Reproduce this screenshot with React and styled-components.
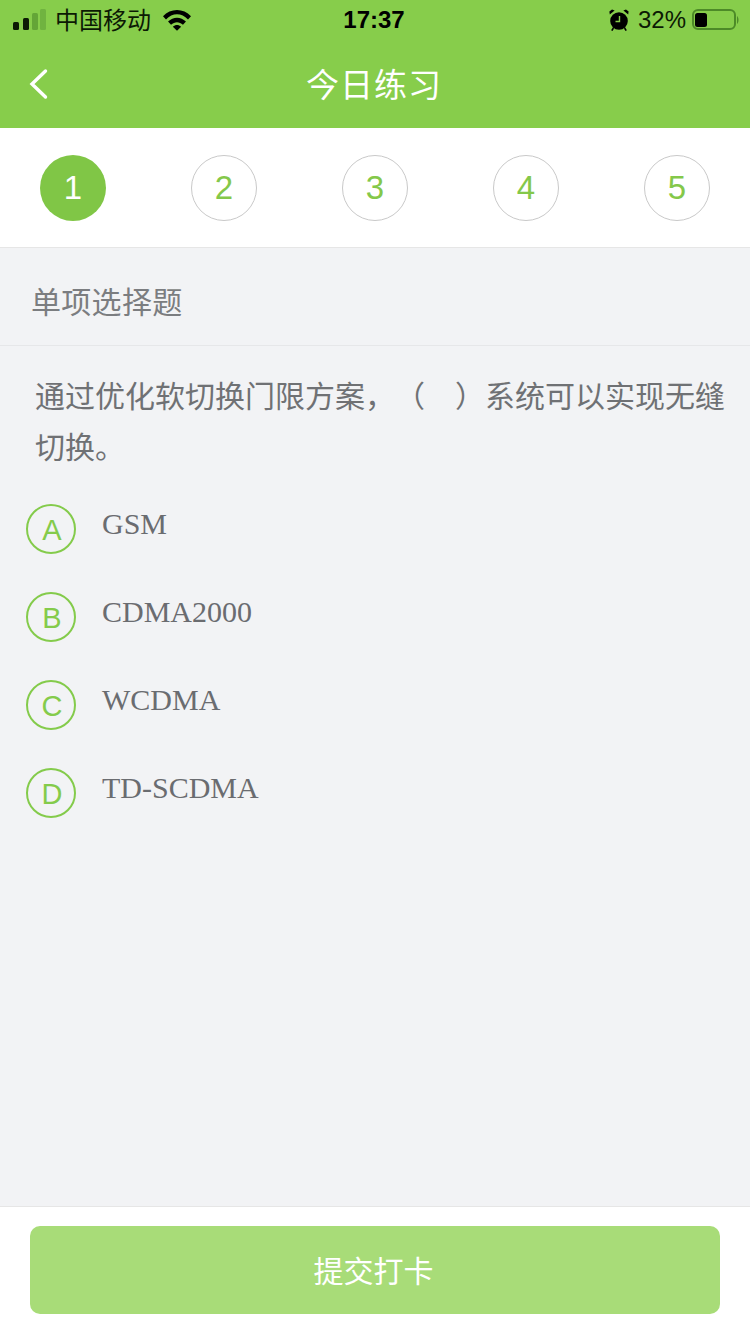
import React from 'react';
import styled, { createGlobalStyle } from 'styled-components';

const sans = `"Liberation Sans", "Noto Sans CJK SC", sans-serif`;

const GlobalStyle = createGlobalStyle`
  html, body {
    margin: 0;
    padding: 0;
    background: #f2f3f5;
  }
  * {
    box-sizing: border-box;
  }
`;

const Page = styled.div`
  width: 750px;
  height: 1334px;
  display: flex;
  flex-direction: column;
  background: #f2f3f5;
  font-family: ${sans};
  overflow: hidden;
`;

// Green header with the phone status bar
const Header = styled.header`
  height: 128px;
  background: #87cd4b;
  flex-shrink: 0;
`;

const StatusBar = styled.div`
  height: 40px;
  padding: 0 11px 0 13px;
  display: grid;
  grid-template-columns: 1fr auto 1fr;
  align-items: center;
  color: #0c1a04;
`;

const StatusLeft = styled.div`
  display: flex;
  align-items: center;
`;

const StatusRight = styled.div`
  display: flex;
  align-items: center;
  justify-content: flex-end;
`;

const Carrier = styled.span`
  font-size: 24px;
  margin: 0 12px 4px 8px;
`;

const Clock = styled.span`
  font-size: 24px;
  font-weight: 700;
  color: #000;
  margin-right: 4px;
`;

const Percent = styled.span`
  font-size: 24px;
  margin: 0 5px 0 9px;
`;

const TitleBar = styled.div`
  height: 88px;
  display: flex;
  align-items: center;
  justify-content: center;
  position: relative;
  padding: 0 2px 2px 0;
`;

const BackIcon = styled.svg`
  position: absolute;
  left: 28px;
  top: 28px;
`;

const Title = styled.h1`
  margin: 0;
  font-size: 33px;
  font-weight: 400;
  color: #fff;
  letter-spacing: 1px;
`;

// Question number strip
const Steps = styled.div`
  height: 120px;
  padding: 27px 40px 0;
  background: #fff;
  border-bottom: 1px solid #e6e6e6;
  display: flex;
  justify-content: space-between;
  align-items: flex-start;
  flex-shrink: 0;
`;

const Step = styled.div`
  width: 66px;
  height: 66px;
  border-radius: 50%;
  display: flex;
  align-items: center;
  justify-content: center;
  font-size: 33px;
  color: ${props => (props.$active ? '#fff' : '#84c84a')};
  background: ${props => (props.$active ? '#80c646' : '#fff')};
  border: ${props => (props.$active ? 'none' : '1px solid #c9c9c9')};
`;

const SectionLabel = styled.div`
  height: 98px;
  padding: 6px 30px 0 31px;
  display: flex;
  align-items: center;
  border-bottom: 1px solid #e6e7e9;
  font-size: 30px;
  letter-spacing: 0.3px;
  color: #7b7d80;
  flex-shrink: 0;
`;

const Main = styled.main`
  flex: 1;
`;

const Question = styled.p`
  margin: 0;
  padding: 25px 20px 0 35px;
  font-size: 30px;
  line-height: 51px;
  color: #6f7174;
  text-spacing-trim: space-all;
`;

const Options = styled.div`
  margin-top: 31px;
  padding-left: 26px;
  display: flex;
  flex-direction: column;
  gap: 38px;
`;

const Option = styled.div`
  display: flex;
  align-items: flex-start;
  height: 50px;
`;

const OptionBadge = styled.div`
  width: 50px;
  height: 50px;
  border-radius: 50%;
  border: 2px solid #84cb4b;
  display: flex;
  align-items: center;
  justify-content: center;
  font-size: 29px;
  color: #84cb4b;
  flex-shrink: 0;
  padding: 3px 0 0 2px;
`;

const OptionText = styled.span`
  margin-left: 26px;
  font-family: "Liberation Serif", serif;
  font-size: 30px;
  line-height: 40px;
  color: #6a6c70;
`;

const Footer = styled.footer`
  height: 128px;
  padding: 19px 30px 0;
  background: #fff;
  border-top: 1px solid #e6e6e6;
  flex-shrink: 0;
`;

const SubmitButton = styled.button`
  width: 690px;
  height: 88px;
  padding: 0 3px 2px 0;
  border: none;
  border-radius: 10px;
  background: #a8dc78;
  color: #fff;
  font-family: ${sans};
  font-size: 30px;
`;

const SignalBars = () => (
  <svg width="34" height="22" viewBox="0 0 34 22">
    <rect x="0" y="13" width="6" height="8" rx="1.5" fill="#0c1a04" />
    <rect x="10" y="9" width="6" height="12" rx="1.5" fill="#0c1a04" />
    <rect x="19" y="4" width="6" height="17" rx="1.5" fill="#64a537" />
    <rect x="27" y="0" width="6" height="21" rx="1.5" fill="#70b340" />
  </svg>
);

const WifiIcon = () => (
  <svg width="28" height="22" viewBox="0 0 30 23">
    <path d="M0 7.5C8 -1.5 22 -1.5 30 7.5L26.8 11C20 3.6 10 3.6 3.2 11Z" fill="#000" />
    <path d="M5.4 13.2C11 7.8 19 7.8 24.6 13.2L21.4 16.6C17.4 13 12.6 13 8.6 16.6Z" fill="#000" />
    <path d="M10.6 18.6C13.2 16.2 16.8 16.2 19.4 18.6L15 23Z" fill="#000" />
  </svg>
);

const AlarmIcon = () => (
  <svg width="20" height="22" viewBox="0 0 20 22">
    <circle cx="10" cy="12" r="8.8" fill="#000" />
    <path d="M10.5 7V12.5H6.5" stroke="#87cd4b" strokeWidth="1.4" fill="none" />
    <path d="M0.8 5.4L5.6 1.4L3 0.4L0.4 2.6Z" fill="#000" />
    <path d="M19.2 5.4L14.4 1.4L17 0.4L19.6 2.6Z" fill="#000" />
    <path d="M4.4 19L2.8 21.6M15.6 19L17.2 21.6" stroke="#000" strokeWidth="1.6" />
  </svg>
);

const BatteryIcon = () => (
  <svg width="48" height="24" viewBox="0 0 48 24">
    <rect x="2" y="2" width="42" height="19" rx="5" fill="none" stroke="#4d8a28" strokeWidth="2" />
    <rect x="4" y="5" width="12" height="14" rx="2.5" fill="#000" />
    <path d="M46 8C48 9.5 48 14.5 46 16Z" fill="#4d8a28" />
  </svg>
);

const steps = [1, 2, 3, 4, 5];

const options = [
  { key: 'A', text: 'GSM' },
  { key: 'B', text: 'CDMA2000' },
  { key: 'C', text: 'WCDMA' },
  { key: 'D', text: 'TD-SCDMA' },
];

export default function App() {
  return (
    <Page>
      <GlobalStyle />
      <Header>
        <StatusBar>
          <StatusLeft>
            <SignalBars />
            <Carrier>中国移动</Carrier>
            <WifiIcon />
          </StatusLeft>
          <Clock>17:37</Clock>
          <StatusRight>
            <AlarmIcon />
            <Percent>32%</Percent>
            <BatteryIcon />
          </StatusRight>
        </StatusBar>
        <TitleBar>
          <BackIcon width="22" height="32" viewBox="0 0 22 32">
            <path d="M17.5 3L4 16L17.5 29" fill="none" stroke="#fff" strokeWidth="3.4" strokeLinecap="round" />
          </BackIcon>
          <Title>今日练习</Title>
        </TitleBar>
      </Header>
      <Steps>
        {steps.map(n => (
          <Step key={n} $active={n === 1}>{n}</Step>
        ))}
      </Steps>
      <SectionLabel>单项选择题</SectionLabel>
      <Main>
        <Question>通过优化软切换门限方案，（　）系统可以实现无缝切换。</Question>
        <Options>
          {options.map(o => (
            <Option key={o.key}>
              <OptionBadge>{o.key}</OptionBadge>
              <OptionText>{o.text}</OptionText>
            </Option>
          ))}
        </Options>
      </Main>
      <Footer>
        <SubmitButton>提交打卡</SubmitButton>
      </Footer>
    </Page>
  );
}
